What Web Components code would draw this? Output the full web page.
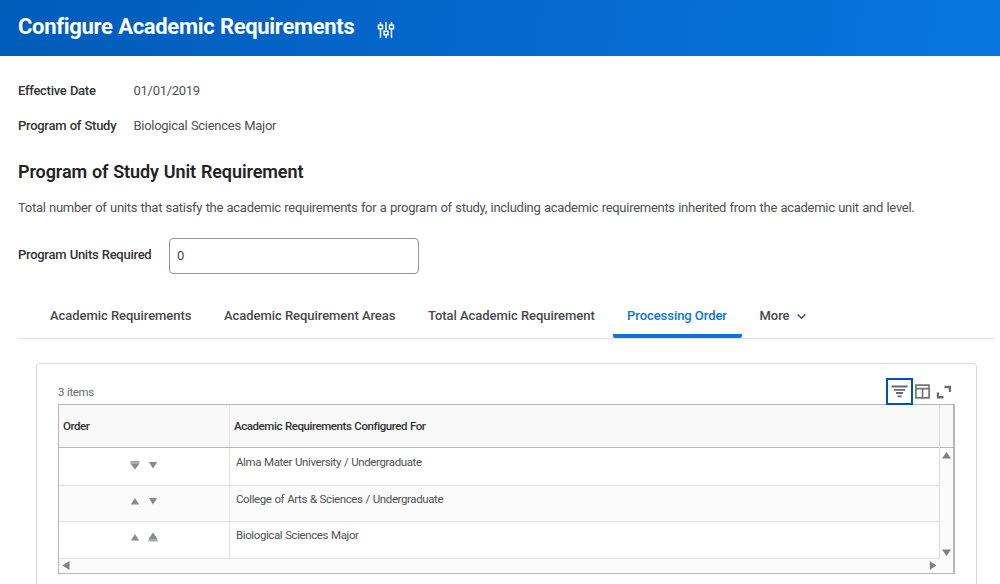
<!DOCTYPE html>
<html lang="en">
<head>
<meta charset="utf-8">
<title>Configure Academic Requirements</title>
<style>
    body {
        margin: 0;
        height: 584px;
        overflow: hidden;
        background: #fff;
        color: #505050;
        font-family: Roboto, "Liberation Sans", sans-serif;
        font-size: 13px;
        letter-spacing: -0.28px;
        word-spacing: 0.5px;
    }
</style>
</head>
<body>
<page-header>Configure Academic Requirements</page-header>
<requirement-page>
    <form-field label="Effective Date">01/01/2019</form-field>
    <form-field label="Program of Study">Biological Sciences Major</form-field>
    <page-section heading="Program of Study Unit Requirement">Total number of units that satisfy the academic requirements for a program of study, including academic requirements inherited from the academic unit and level.</page-section>
    <number-field label="Program Units Required" value="0"></number-field>
    <tab-bar>
        <tab-item style="width: 174px">Academic Requirements</tab-item>
        <tab-item style="width: 204px">Academic Requirement Areas</tab-item>
        <tab-item style="width: 199px">Total Academic Requirement</tab-item>
        <tab-item style="width: 129px" selected>Processing Order</tab-item>
        <tab-item menu>More</tab-item>
    </tab-bar>
    <grid-panel count="3 items">
        <order-grid>
            <order-row position="first">Alma Mater University / Undergraduate</order-row>
            <order-row striped>College of Arts &amp; Sciences / Undergraduate</order-row>
            <order-row position="last">Biological Sciences Major</order-row>
        </order-grid>
    </grid-panel>
</requirement-page>

<script>
// Attaches an open shadow root holding the class styles and markup
class BaseElement extends HTMLElement {
    static styles = ""

    constructor() {
        super()
        this.attachShadow({ mode: "open" })
    }

    connectedCallback() {
        this.shadowRoot.innerHTML = `
            <style>${this.constructor.styles}</style>
            ${this.template()}
        `
    }

    template() {
        return "<slot></slot>"
    }
}

class PageHeader extends BaseElement {
    static styles = `
        :host {
            display: flex;
            align-items: center;
            gap: 23px;
            box-sizing: border-box;
            height: 56px;
            padding: 0 18px 2px;
            background: linear-gradient(100deg, #005cb9 0%, #0875e1 100%);
            color: #fff;
        }

        h1 {
            margin: 0;
            font-size: 22px;
            line-height: 26px;
            font-weight: 700;
            letter-spacing: -0.32px;
        }

        svg {
            margin-top: 6px;
        }
    `

    template() {
        return `
            <h1><slot></slot></h1>
            <svg width="18" height="18" viewBox="0 0 18 18" fill="none" stroke="#fff" stroke-width="1.5">
                <path d="M3.5 1v3M3.500 8v9M9 1v8M9 14v3M14.500 1v3M14.500 8v9"/>
                <rect x="1.500" y="4.200" width="4" height="3.500"/>
                <rect x="7" y="10.200" width="4" height="3.500"/>
                <rect x="12.500" y="4.200" width="4" height="3.500"/>
            </svg>
        `
    }
}

class RequirementPage extends BaseElement {
    static styles = `
        :host {
            display: flex;
            flex-direction: column;
            padding: 17px 5px 0 18px;
        }
    `
}

class FormField extends BaseElement {
    static styles = `
        :host {
            display: grid;
            grid-template-columns: 115.500px 1fr;
            align-items: center;
            height: 35px;
        }

        label {
            color: #333;
            font-weight: 500;
        }
    `

    template() {
        return `<label>${this.getAttribute("label")}</label><span><slot></slot></span>`
    }
}

class PageSection extends BaseElement {
    static styles = `
        :host {
            display: block;
        }

        h2 {
            margin: 18px 0 0;
            color: #222;
            font-size: 18px;
            line-height: 22px;
            font-weight: 600;
            letter-spacing: -0.09px;
        }

        p {
            margin: 16px 0 0;
            line-height: 18px;
            white-space: nowrap;
        }
    `

    template() {
        return `<h2>${this.getAttribute("heading")}</h2><p><slot></slot></p>`
    }
}

class NumberField extends BaseElement {
    static styles = `
        :host {
            display: grid;
            grid-template-columns: 151px 250px;
            align-items: center;
            margin-top: 21px;
        }

        label {
            padding-bottom: 3px;
            color: #333;
            font-weight: 500;
        }

        input {
            box-sizing: border-box;
            width: 250px;
            height: 36px;
            padding: 0 7px 1px;
            border: 1px solid #8b959e;
            border-radius: 4px;
            color: #494949;
            font: inherit;
        }
    `

    template() {
        return `<label>${this.getAttribute("label")}</label><input value="${this.getAttribute("value")}">`
    }
}

class TabBar extends BaseElement {
    static styles = `
        :host {
            display: flex;
            height: 46px;
            margin-top: 18px;
            border-bottom: 1px solid #dfe2e6;
            padding-left: 18px;
            letter-spacing: -0.05px;
            word-spacing: 0;
        }
    `
}

class TabItem extends BaseElement {
    static styles = `
        :host {
            display: flex;
            align-items: center;
            gap: 8px;
            box-sizing: border-box;
            height: 46px;
            padding: 1px 14px 0;
            color: #494949;
            font-weight: 500;
            white-space: nowrap;
        }

        :host([selected]) {
            color: #0875e1;
            background: linear-gradient(#0875e1, #0875e1) bottom / 100% 4px no-repeat;
            border-radius: 2px;
        }

        :host([menu]) {
            padding-left: 17.500px;
        }

        svg {
            margin-top: 1px;
        }
    `

    template() {
        const arrow = this.hasAttribute("menu")
            ? `<svg width="9" height="7" viewBox="0 0 9 7"><path d="M.7 1.500l3.800 3.800 3.800-3.800" fill="none" stroke="#494949" stroke-width="1.400"/></svg>`
            : ""
        return `<span><slot></slot></span>${arrow}`
    }
}

class GridPanel extends BaseElement {
    static styles = `
        :host {
            display: block;
            box-sizing: border-box;
            width: 941px;
            height: 240px;
            margin: 24px 0 0 18px;
            padding: 14px 21px 0;
            border: 1px solid #d5d9de;
            border-radius: 4px;
        }

        header {
            display: flex;
            align-items: center;
            justify-content: space-between;
            height: 26px;
            font-size: 11.500px;
            letter-spacing: -0.4px;
            color: #65696d;
        }

        header > span {
            padding-top: 2px;
        }

        .tools {
            display: flex;
            align-items: center;
            gap: 1px;
            height: 27px;
            margin-bottom: -1px;
            position: relative;
        }

        button {
            display: grid;
            place-items: center;
            width: 22px;
            height: 27px;
            padding: 0;
            border: 0;
            background: none;
        }

        .active {
            width: 27px;
            border: 2px solid #0053b4;
        }
    `

    template() {
        return `
            <header>
                <span>${this.getAttribute("count")}</span>
                <div class="tools">
                    <button class="active">
                        <svg width="17" height="13" viewBox="0 0 17 13" stroke="#65696d" stroke-width="1.800">
                            <path d="M.5 1.500h16M3 4.800h11M5 8h7M6.500 11.300h4"/>
                        </svg>
                    </button>
                    <button style="width: 17px">
                        <svg width="15" height="15" viewBox="0 0 15 15" fill="none" stroke="#757575" stroke-width="1.700">
                            <path d="M.9 1.200h13.200v12.700H.9zM.9 4.600h13.200M7.500 4.600v9.300"/>
                        </svg>
                    </button>
                    <button style="width: 23px">
                        <svg width="15" height="14" viewBox="0 0 15 14" fill="none" stroke="#6c6c6c" stroke-width="2.400">
                            <path d="M8.500 2H14v5M2 7.500v4.700h5.500"/>
                        </svg>
                    </button>
                </div>
            </header>
            <slot></slot>
        `
    }
}

class OrderGrid extends BaseElement {
    static styles = `
        :host {
            display: grid;
            grid-template: 43px 111px 14px / 1fr 14px;
            box-sizing: border-box;
            width: 897px;
            border: 1px solid #b5b6b8;
            border-right-width: 2px;
            font-size: 11.500px;
            letter-spacing: -0.4px;
        }

        .head {
            display: grid;
            grid-template-columns: 170px 1fr;
            color: #333;
            font-weight: 500;
            letter-spacing: -0.43px;
        }

        .head span {
            display: flex;
            align-items: center;
            padding-left: 4px;
        }

        .head span + span {
            border-left: 1px solid #e3e4e6;
        }

        .head, .corner {
            background: #f8f8f8;
            border-bottom: 1px solid #b5b6b8;
        }

        .corner, .vertical {
            border-left: 1px solid #dcdddf;
        }

        .vertical, .horizontal {
            display: flex;
            justify-content: space-between;
            align-items: center;
            background: #fbfbfb;
        }

        .vertical {
            flex-direction: column;
            padding: 3px 0 2px;
        }

        .horizontal {
            grid-column: 1 / -1;
            padding: 0 16px 1px 3px;
        }

        svg {
            display: block;
            fill: #808080;
        }
    `

    template() {
        return `
            <div class="head"><span>Order</span><span>Academic Requirements Configured For</span></div>
            <div class="corner"></div>
            <div class="body"><slot></slot></div>
            <div class="vertical">
                <svg width="9" height="8"><path d="M4.500 1L9 7.500H0z"/></svg>
                <svg width="9" height="8"><path d="M0 .5h9L4.500 7z"/></svg>
            </div>
            <div class="horizontal">
                <svg width="8" height="9"><path d="M7.500 0v9L.5 4.500z"/></svg>
                <svg width="8" height="9"><path d="M.8 0v9l6.500-4.500z"/></svg>
            </div>
        `
    }
}

class OrderRow extends BaseElement {
    static styles = `
        :host {
            display: grid;
            grid-template-columns: 170px 1fr;
            box-sizing: border-box;
            height: 37px;
            border-bottom: 1px solid #dcdddf;
            background: #fff;
        }

        :host([striped]) {
            background: #fbfbfb;
            height: 36px;
        }

        .order {
            display: flex;
            justify-content: center;
            align-items: center;
            gap: 8px;
            padding: 0 1px 6px 0;
        }

        .name {
            padding: 6px 0 0 6px;
            border-left: 1px solid #e3e4e6;
            line-height: 14px;
        }

        :host([position="first"]) {
            height: 38px;
        }

        :host([position="first"]) .order {
            padding-bottom: 4px;
        }

        :host([position="first"]) .name {
            padding-top: 7px;
        }

        svg {
            fill: #858b90;
        }
    `

    static icons = {
        up: `<svg width="10" height="10"><path d="M5 2l4.200 6.500H.8z"/></svg>`,
        down: `<svg width="10" height="10"><path d="M.8 2h8.400L5 8.500z"/></svg>`,
        toBottom: `<svg width="10" height="10"><path d="M.5 1h9v2.500h-9z" fill="#a6abaf"/><path d="M.5 3.500h9L5 9.500z"/></svg>`,
        toTop: `<svg width="10" height="10"><path d="M5 .5L9.500 7h-9z"/><path d="M.5 7h9v2.500h-9z" fill="#a6abaf"/></svg>`
    }

    template() {
        const { up, down, toBottom, toTop } = OrderRow.icons
        const position = this.getAttribute("position")
        const left = position === "first" ? toBottom : up
        const right = position === "last" ? toTop : down
        return `<div class="order">${left}${right}</div><div class="name"><slot></slot></div>`
    }
}

customElements.define("page-header", PageHeader)
customElements.define("requirement-page", RequirementPage)
customElements.define("form-field", FormField)
customElements.define("page-section", PageSection)
customElements.define("number-field", NumberField)
customElements.define("tab-bar", TabBar)
customElements.define("tab-item", TabItem)
customElements.define("grid-panel", GridPanel)
customElements.define("order-grid", OrderGrid)
customElements.define("order-row", OrderRow)
</script>
</body>
</html>
